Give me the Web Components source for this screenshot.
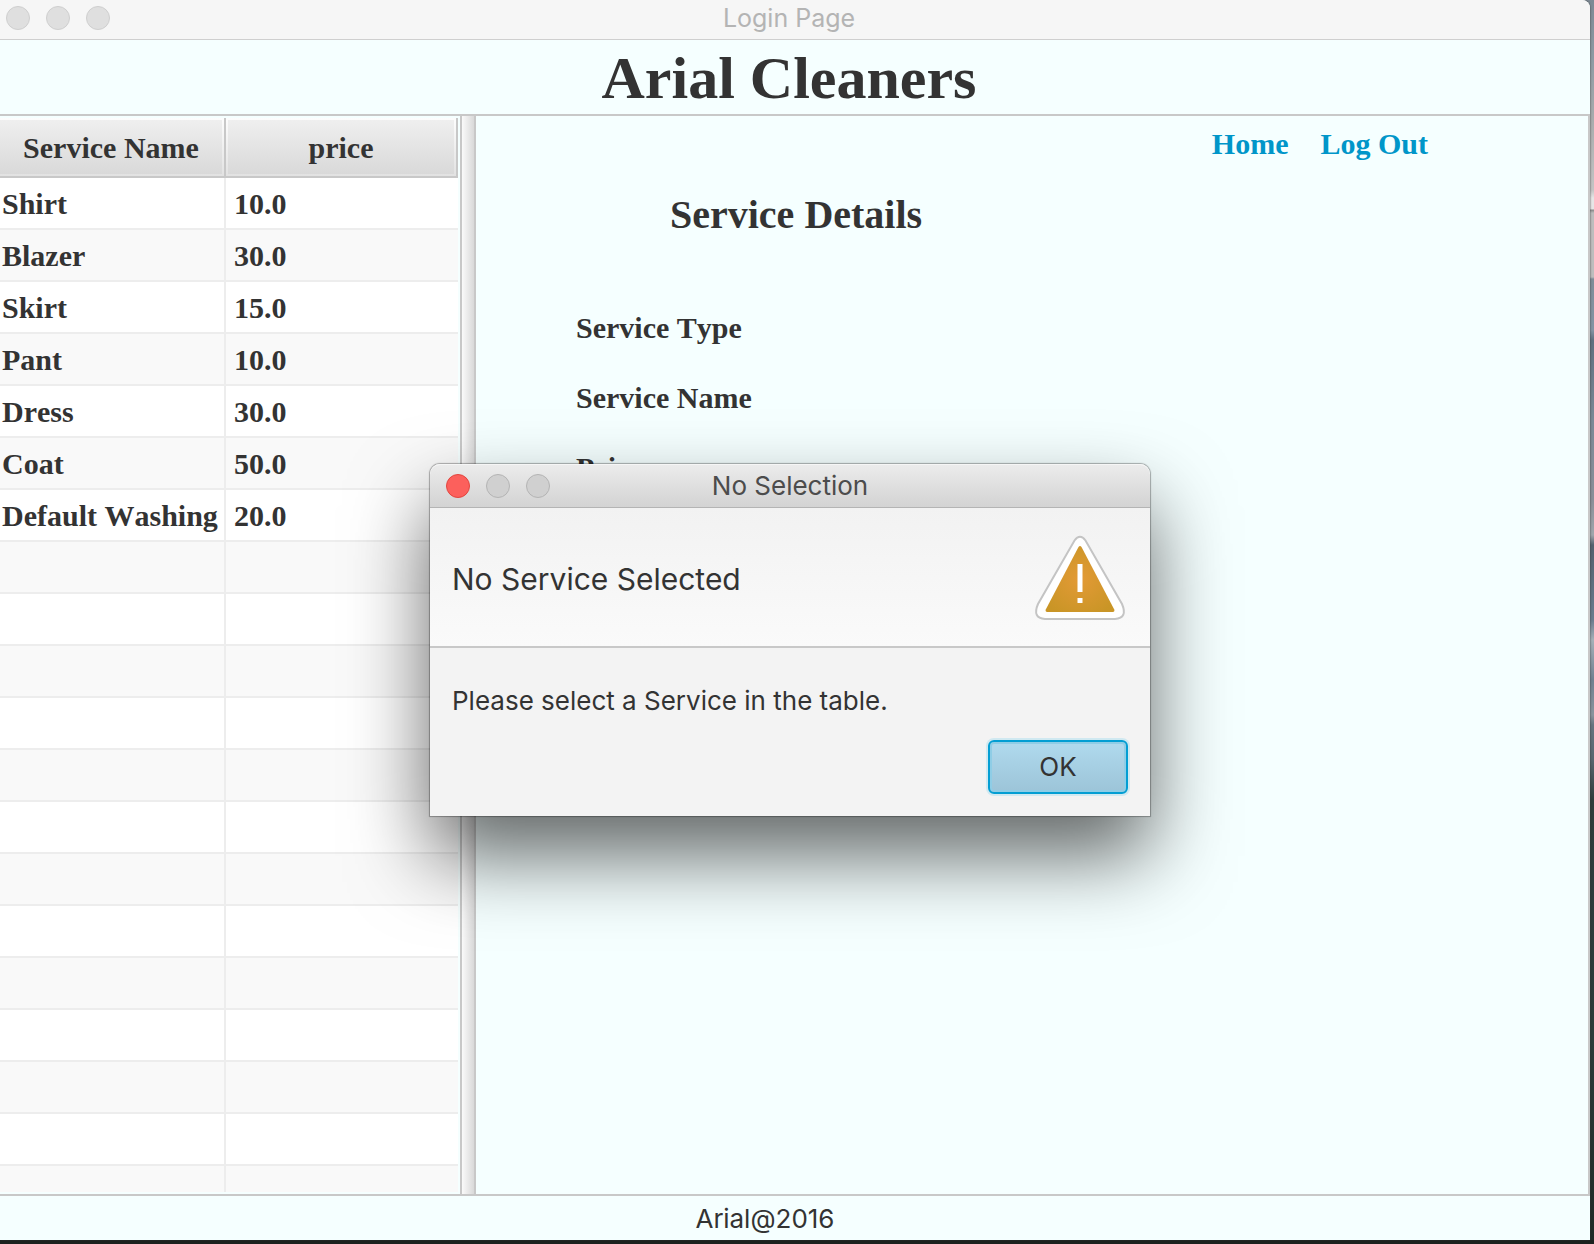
<!DOCTYPE html>
<html lang="en">
<head>
<meta charset="utf-8">
<title>Login Page</title>
<style>
html, body { margin: 0; height: 100%; }
body {
  overflow: hidden;
  font-family: "Liberation Serif", "Times New Roman", serif;
  font-kerning: none;
  color: #333;
  background:
    linear-gradient(#1c211e, #1c211e) 0 100% / 100% 4px no-repeat,
    linear-gradient(#7d8994 0, #8f9ba4 60px, #a9acad 120px, #c4c4c4 190px, #e6e6e6 198px, #e6e6e6 209px, #8a8a8a 210px, #bdbdbd 213px, #bdbdbd 277px, #7f8d98 279px, #8494a4 330px, #5f7080 340px, #7b8996 420px, #8a8f98 500px, #a0a6ac 535px, #53616e 545px, #6a7c8e 620px, #a5b0b8 640px, #6f8090 680px, #8a949d 715px, #66747f 725px, #59666f 760px, #2f3d3c 800px, #2c3c3a 1040px, #1f2a26 100%);
}
</style>
</head>
<body>
<cleaners-app></cleaners-app>
<script>
const define = (name, html, setup) => {
  const template = document.createElement('template');
  template.innerHTML = html;
  customElements.define(name, class extends HTMLElement {
    constructor() {
      super();
      this.attachShadow({ mode: 'open' }).append(template.content.cloneNode(true));
      if (setup) setup(this.shadowRoot, this);
    }
  });
};

define('window-controls', `
<style>
  :host { display: flex; gap: 16px; }
  button { box-sizing: border-box; width: 24px; height: 24px; padding: 0; border: 1px solid var(--dot-line, #cfcfcf); border-radius: 50%; background: var(--dot, #dfdfdf); }
  .close { background: var(--close, #dfdfdf); border-color: var(--close-line, #cfcfcf); }
</style>
<button class="close" aria-label="Close"></button>
<button aria-label="Minimise"></button>
<button aria-label="Zoom"></button>`);

define('title-bar', `
<style>
  :host { display: grid; grid-template-columns: 1fr auto 1fr; align-items: center; box-sizing: border-box; font-family: Inter, "Open Sans", sans-serif; font-size: 25px; line-height: 32px; }
</style>
<window-controls></window-controls>
<slot></slot>`);

define('service-table', `
<style>
  :host { display: block; overflow: hidden; padding: 2px 2px 2px 0; box-sizing: border-box; contain: size; }
  .view { height: 100%; overflow: hidden; }
  table { width: 100%; border-collapse: separate; border-spacing: 0; table-layout: fixed; font-size: 30px; line-height: 34px; font-weight: bold; }
  col.name { width: 226px; }
  th, td { box-sizing: border-box; white-space: nowrap; }
  th {
    height: 60px; padding: 2px; border: solid #c8c8c8; border-width: 0 2px 2px 0;
    background: linear-gradient(#efefef, #d9d9d9) content-box, linear-gradient(#fdfdfd, #e2e2e2) padding-box;
  }
  th:first-child { padding-left: 0; }
  th span { display: flex; box-sizing: border-box; height: 54px; padding-top: 2px; align-items: center; justify-content: center; }
  td { height: 52px; padding: 2px 0 0 8px; border-bottom: 2px solid #ededed; background: #fff; text-align: left; }
  td:first-child { padding-left: 2px; border-right: 2px solid #ededed; }
  tr:nth-child(even) td { background: #f9f9f9; }
</style>
<div class="view">
<table>
  <colgroup><col class="name"><col></colgroup>
  <thead><tr><th scope="col"><span>Service Name</span></th><th scope="col"><span>price</span></th></tr></thead>
  <tbody></tbody>
</table>
</div>`, root => {
  const services = [['Shirt', '10.0'], ['Blazer', '30.0'], ['Skirt', '15.0'], ['Pant', '10.0'], ['Dress', '30.0'], ['Coat', '50.0'], ['Default Washing', '20.0']];
  const body = root.querySelector('tbody');
  for (let i = 0; i < 20; i++) {
    const row = body.insertRow();
    for (const text of services[i] || ['', '']) row.insertCell().textContent = text;
  }
});

define('split-divider', `
<style>
  :host { display: block; box-sizing: border-box; width: 16px; border: solid #c8c8c8; border-width: 0 2px; background: linear-gradient(90deg, #fafafa, #d9d9d9); }
</style>`);

define('service-details', `
<style>
  :host { display: flex; flex-direction: column; font-size: 30px; line-height: 40px; font-weight: bold; box-sizing: border-box; padding-top: 8px; border-right: 2px solid #c8c8c8; }
  nav { display: flex; justify-content: flex-end; gap: 32px; padding-right: 160px; }
  a { color: #0096c9; text-decoration: none; }
  h2 { margin: 0; padding: 31px 0 58px 194px; font-size: 40px; line-height: 40px; }
  ul { margin: 0; padding: 0 0 0 100px; list-style: none; }
  li { line-height: 70px; }
</style>
<nav><a href="#home">Home</a><a href="#logout">Log Out</a></nav>
<h2>Service Details</h2>
<ul><li>Service Type</li><li>Service Name</li><li>Price</li></ul>`);

define('alert-dialog', `
<style>
  :host { display: block; box-sizing: border-box; border-radius: 10px 10px 0 0; color: #333; font-family: Inter, "Open Sans", sans-serif; font-size: 26px; line-height: 32px; font-kerning: auto; box-shadow: 0 0 1px 1px rgba(0,0,0,.3), 0 40px 80px rgba(0,0,0,.6); }
  title-bar {
    height: 44px; padding: 1px 16px 0; font-size: 26px; border-bottom: 1px solid #b4b4b4; border-radius: 10px 10px 0 0; color: #4c4c4c;
    background: linear-gradient(#ececec, #d3d3d3);
    box-shadow: inset 0 1px #f6f6f6;
    --dot: #d0d0d0; --dot-line: #b4b4b4; --close: #fc605c; --close-line: #e2463f;
  }
  header { display: flex; align-items: center; justify-content: space-between; height: 134px; padding: 4px 22px 0; border-bottom: 2px solid #c8c8c8; background: linear-gradient(#f2f2f2, #fafafa); }
  h2 { margin: 0; font-size: 30px; line-height: 40px; font-weight: normal; }
  svg { display: block; width: 96px; height: 96px; }
  .body { display: flex; flex-direction: column; padding: 37px 22px 22px; background: #f3f3f3; }
  p { margin: 0 0 23px; }
  button {
    align-self: flex-end; box-sizing: border-box; width: 140px; height: 54px; border: 2px solid #039ed3; border-radius: 6px; padding: 0;
    font: inherit; color: #333; background: linear-gradient(#b0daee, #9cc4d8);
    box-shadow: 0 0 0 2px #d0e9f1, inset 0 0 0 2px #8fcde6;
  }
</style>
<title-bar><slot name="title"></slot></title-bar>
<header>
  <h2><slot name="heading"></slot></h2>
  <svg viewBox="0 1 96 96" aria-hidden="true">
    <defs><radialGradient id="amber" cx=".5" cy=".5" r=".6"><stop offset="0" stop-color="#e39a36"/><stop offset="1" stop-color="#c99526"/></radialGradient></defs>
    <path d="M42.500 10.500Q48 3 53.500 10.500L90 74Q96 88 83 89H13Q0 88 6 74Z" fill="#fff" stroke="#c4c4c4" stroke-width="2"/>
    <path d="M46.500 17Q48 15 49.500 17L82.500 80Q82.500 82 81 82H15Q13.500 82 13.500 80Z" fill="url(#amber)"/>
    <path d="M45.500 34h5v28h-5zM45.500 68h5v5h-5z" fill="#fff"/>
  </svg>
</header>
<div class="body">
  <p><slot></slot></p>
  <button type="button">OK</button>
</div>`);

define('cleaners-app', `
<style>
  :host { display: grid; grid-template-rows: auto auto 1fr auto; height: calc(100vh - 4px); margin-right: 4px; background: #f5ffff; border-top-right-radius: 8px; overflow: hidden; box-shadow: 0 0 2px #333; }
  .bar { height: 40px; padding: 0 18px 3px 6px; border-bottom: 1px solid #cfcfcf; background: #f6f6f6; color: #b4b4b4; }
  h1 { margin: 0; padding: 4px 12px 2px 0; border-bottom: 2px solid #c8c8c8; text-align: center; font-size: 60px; line-height: 68px; }
  main { display: grid; grid-template-columns: 460px auto 1fr; min-height: 0; }
  footer { border-top: 2px solid #c8c8c8; padding: 7px 60px 5px 0; text-align: center; font-family: Inter, "Open Sans", sans-serif; font-size: 26px; line-height: 32px; }
  alert-dialog { position: absolute; left: 430px; top: 464px; width: 720px; }
</style>
<title-bar class="bar">Login Page</title-bar>
<h1>Arial Cleaners</h1>
<main>
  <service-table></service-table>
  <split-divider></split-divider>
  <service-details></service-details>
</main>
<footer>Arial@2016</footer>
<alert-dialog role="alertdialog" aria-label="No Selection">
  <span slot="title">No Selection</span>
  <span slot="heading">No Service Selected</span>
  Please select a Service in the table.
</alert-dialog>`);
</script>
</body>
</html>
